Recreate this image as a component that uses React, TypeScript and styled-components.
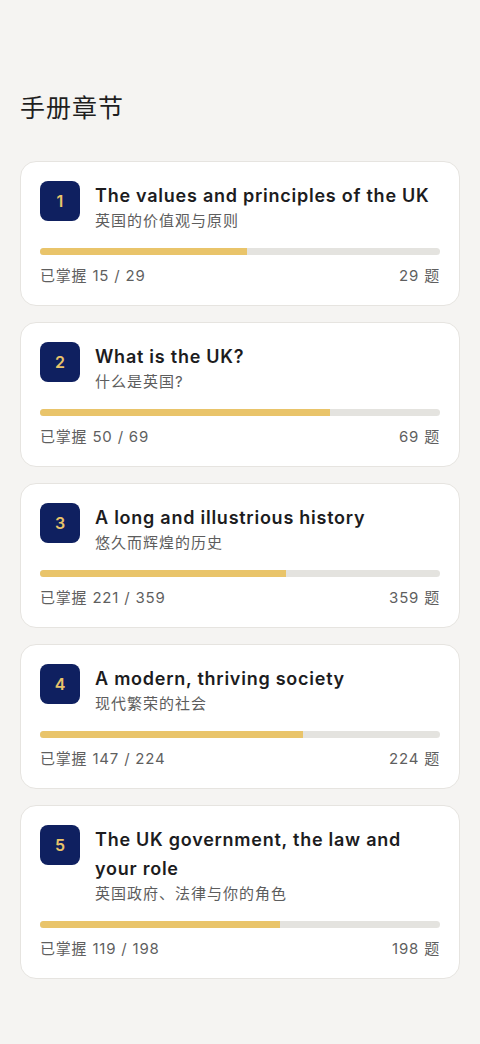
import React from 'react';
import styled, { createGlobalStyle } from 'styled-components';

const GlobalStyle = createGlobalStyle`
  html, body {
    margin: 0;
    padding: 0;
    background-color: #f5f4f2;
  }
  body {
    font-family: Inter, "Noto Sans CJK SC", sans-serif;
    color: #1c1c1e;
  }
`;

const Page = styled.div`
  padding: 91px 20px 40px;
  min-height: 1044px;
  box-sizing: border-box;
`;

const Heading = styled.h1`
  margin: 0 0 36px;
  font-size: 25px;
  line-height: 34px;
  font-weight: 400;
  color: #1f1f1f;
  letter-spacing: 1px;
`;

const List = styled.div`
  display: flex;
  flex-direction: column;
  gap: 16px;
`;

const Card = styled.div`
  background-color: #ffffff;
  border: 1px solid #e6e4e0;
  border-radius: 16px;
  padding: 19px 19px 19px;
`;

const TopRow = styled.div`
  display: flex;
  gap: 15px;
  align-items: flex-start;
`;

const Badge = styled.div`
  flex: none;
  width: 40px;
  height: 40px;
  border-radius: 8px;
  background-color: #0f2060;
  color: #e9c46a;
  display: flex;
  align-items: center;
  justify-content: center;
  font-size: 16px;
  font-weight: 600;
`;

const TextBlock = styled.div`
  display: flex;
  flex-direction: column;
  min-width: 0;
`;

const Title = styled.div`
  font-size: 18px;
  line-height: 29px;
  font-weight: 600;
  color: #1c1c1e;
  letter-spacing: 0.75px;
`;

const Subtitle = styled.div`
  font-size: 15px;
  line-height: 22px;
  color: #5d5d5d;
  letter-spacing: 1px;
`;

const Track = styled.div`
  margin-top: 16px;
  height: 7px;
  border-radius: 4px;
  background-color: #e4e3df;
  overflow: hidden;
`;

const Fill = styled.div`
  height: 100%;
  background-color: #e9c46a;
`;

const Footer = styled.div`
  margin-top: 11px;
  display: flex;
  justify-content: space-between;
  font-size: 15px;
  line-height: 20px;
  color: #5f5f5f;
  letter-spacing: 0.8px;
`;

const chapters = [
  { no: 1, title: 'The values and principles of the UK', zh: '英国的价值观与原则', done: 15, total: 29 },
  { no: 2, title: 'What is the UK?', zh: '什么是英国?', done: 50, total: 69 },
  { no: 3, title: 'A long and illustrious history', zh: '悠久而辉煌的历史', done: 221, total: 359 },
  { no: 4, title: 'A modern, thriving society', zh: '现代繁荣的社会', done: 147, total: 224 },
  { no: 5, title: 'The UK government, the law and your role', zh: '英国政府、法律与你的角色', done: 119, total: 198 },
];

const App: React.FC = () => {
  return (
    <Page>
      <GlobalStyle />
      <Heading>手册章节</Heading>
      <List>
        {chapters.map((c) => (
          <Card key={c.no}>
            <TopRow>
              <Badge>{c.no}</Badge>
              <TextBlock>
                <Title>{c.title}</Title>
                <Subtitle>{c.zh}</Subtitle>
              </TextBlock>
            </TopRow>
            <Track>
              <Fill style={{ width: `${(c.done / c.total) * 100}%` }} />
            </Track>
            <Footer>
              <span>已掌握 {c.done} / {c.total}</span>
              <span>{c.total} 题</span>
            </Footer>
          </Card>
        ))}
      </List>
    </Page>
  );
};

export default App;
